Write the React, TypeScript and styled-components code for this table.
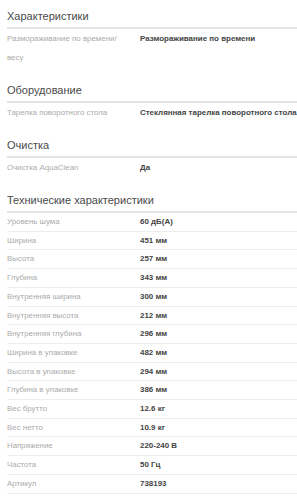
import React from "react";
import styled, { createGlobalStyle } from "styled-components";

type Spec = { label: string; value: string };
type Group = { title: string; rows: Spec[]; lined?: boolean };

const groups: Group[] = [
  {
    title: "Характеристики",
    rows: [
      {
        label: "Размораживание по времени/ весу",
        value: "Размораживание по времени",
      },
    ],
  },
  {
    title: "Оборудование",
    rows: [
      {
        label: "Тарелка поворотного стола",
        value: "Стеклянная тарелка поворотного стола",
      },
    ],
  },
  {
    title: "Очистка",
    rows: [{ label: "Очистка AquaClean", value: "Да" }],
  },
  {
    title: "Технические характеристики",
    lined: true,
    rows: [
      { label: "Уровень шума", value: "60 дБ(A)" },
      { label: "Ширина", value: "451 мм" },
      { label: "Высота", value: "257 мм" },
      { label: "Глубина", value: "343 мм" },
      { label: "Внутренняя ширина", value: "300 мм" },
      { label: "Внутренняя высота", value: "212 мм" },
      { label: "Внутренняя глубина", value: "296 мм" },
      { label: "Ширина в упаковке", value: "482 мм" },
      { label: "Высота в упаковке", value: "294 мм" },
      { label: "Глубина в упаковке", value: "386 мм" },
      { label: "Вес брутто", value: "12.6 кг" },
      { label: "Вес нетто", value: "10.9 кг" },
      { label: "Напряжение", value: "220-240 В" },
      { label: "Частота", value: "50 Гц" },
      { label: "Артикул", value: "738193" },
    ],
  },
];

export default function App() {
  return (
    <>
      <GlobalStyle />
      <Page>
        {groups.map((g) => (
          <Section key={g.title}>
            <Heading>{g.title}</Heading>
            {g.rows.map((r) => (
              <Row key={r.label} $lined={g.lined}>
                <Label>{r.label}</Label>
                <Value>{r.value}</Value>
              </Row>
            ))}
          </Section>
        ))}
      </Page>
    </>
  );
}

const GlobalStyle = createGlobalStyle`
  html, body {
    margin: 0;
    padding: 0;
    background: #fff;
    overflow: hidden;
  }
  body {
    font-family: "Liberation Sans", Arial, sans-serif;
  }
`;

const Page = styled.div`
  width: 297px;
  height: 500px;
  overflow: hidden;
  padding: 8px 0 0 7px;
  box-sizing: border-box;
  display: flex;
  flex-direction: column;
  gap: 15px;
`;

const Section = styled.section`
  display: flex;
  flex-direction: column;
  width: 300px;
`;

const Heading = styled.h3`
  margin: 0;
  font-size: 11px;
  font-weight: 400;
  line-height: 16px;
  color: #4a4a4a;
  padding-bottom: 3px;
  border-bottom: 2px solid #e4e4e4;
`;

const Row = styled.div<{ $lined?: boolean }>`
  display: grid;
  grid-template-columns: 133px 1fr;
  line-height: ${(p) => (p.$lined ? "17.7px" : "19px")};
  border-bottom: ${(p) => (p.$lined ? "1px solid #ededed" : "none")};
`;

const Label = styled.div`
  font-size: 7.9px;
  color: #ababab;
  padding-right: 10px;
`;

const Value = styled.div`
  font-size: 7.95px;
  color: #444;
  font-weight: 700;
  white-space: nowrap;
`;
